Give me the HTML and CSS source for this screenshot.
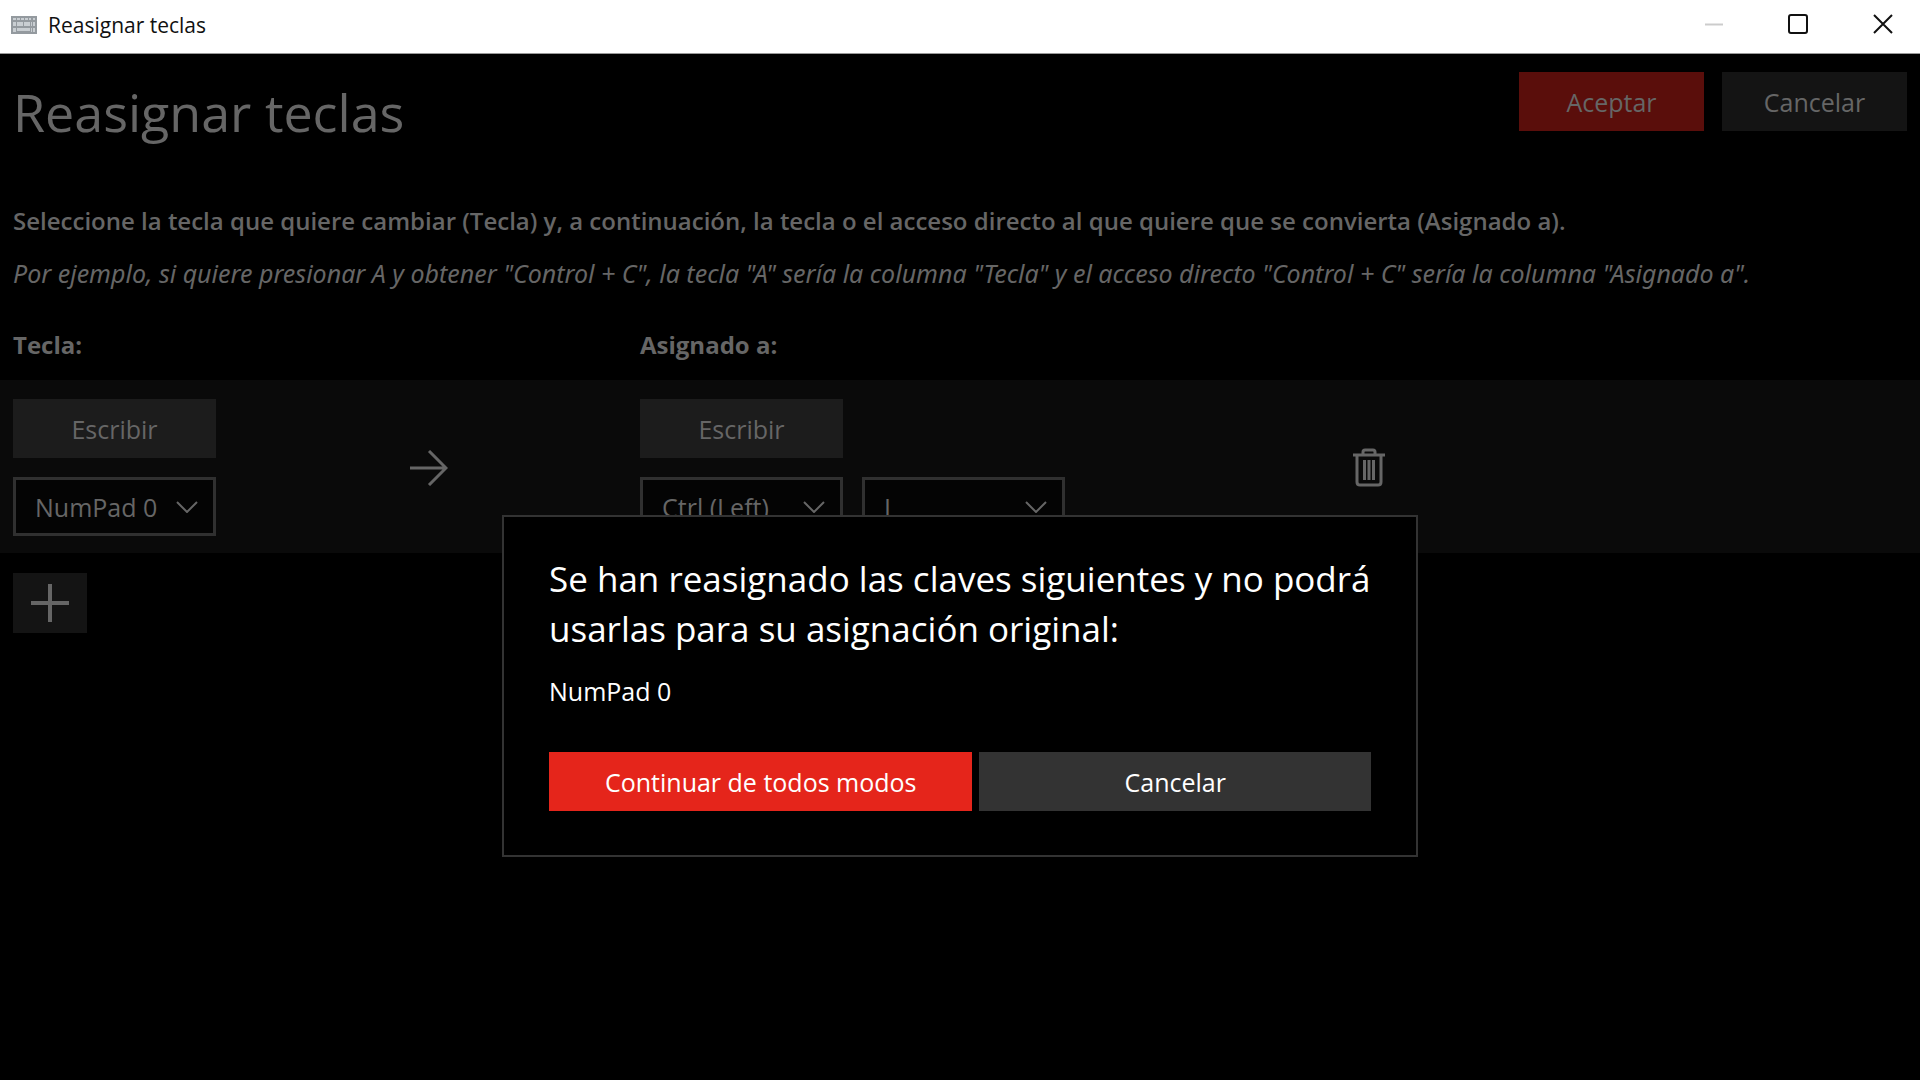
FILE: index.html
```html
<!DOCTYPE html>
<html lang="es">
<head>
<meta charset="utf-8">
<title>Reasignar teclas</title>
<link rel="stylesheet" href="styles.css">
</head>
<body>
<header class="titlebar">
  <svg class="app-icon" viewBox="0 0 26 18" aria-hidden="true">
    <rect width="26" height="18" fill="#949a9f"/>
    <path d="M2 2h3v2H2zM6 2h3v2H6zM10 2h3v2h-3zM14 2h3v2h-3zM18 2h2v2h-2zM22 2h2v2h-2zM2 6h3v4H2zM6 6h6v4H6zM13 6h6v4h-6zM20 6h1v4h-1zM22 6h2v4h-2zM2 12h3v4H2zM6 12h13v3H6zM20 12h1v4h-1zM22 12h2v4h-2z" fill="#c9ced2"/>
  </svg>
  <span class="titlebar-text">Reasignar teclas</span>
  <div class="window-controls">
    <button class="window-button window-button-off" aria-label="Minimizar" disabled>
      <svg viewBox="0 0 20 20"><path d="M1 10.500h18"/></svg>
    </button>
    <button class="window-button" aria-label="Maximizar">
      <svg viewBox="0 0 20 20"><rect x="1" y="1" width="18" height="18" rx="2"/></svg>
    </button>
    <button class="window-button window-button-close" aria-label="Cerrar">
      <svg viewBox="0 0 20 20"><path d="M1 1l18 18M19 1L1 19"/></svg>
    </button>
  </div>
</header>

<main class="content">
  <div class="page-head">
    <h1 class="page-title">Reasignar teclas</h1>
    <div class="page-actions">
      <button class="button button-accent">Aceptar</button>
      <button class="button">Cancelar</button>
    </div>
  </div>
  <p class="intro">Seleccione la tecla que quiere cambiar (Tecla) y, a continuación, la tecla o el acceso directo al que quiere que se convierta (Asignado a).</p>
  <p class="example">Por ejemplo, si quiere presionar A y obtener "Control + C", la tecla "A" sería la columna "Tecla" y el acceso directo "Control + C" sería la columna "Asignado a".</p>

  <div class="remap-grid column-heads">
    <h2 class="column-head" id="head-key">Tecla:</h2>
    <h2 class="column-head column-target" id="head-target">Asignado a:</h2>
  </div>

  <div class="remap-grid remap-row">
    <div class="key-group">
      <button class="button button-type">Escribir</button>
      <div class="select-box">
        <select aria-labelledby="head-key"><option>NumPad 0</option></select>
        <svg class="chevron" viewBox="0 0 22 12" aria-hidden="true"><path d="M1 1l10 10L21 1"/></svg>
      </div>
    </div>
    <svg class="arrow" viewBox="0 0 38 36" aria-hidden="true"><path d="M0 18h36M19 1l17 17-17 17"/></svg>
    <div class="key-group">
      <button class="button button-type">Escribir</button>
      <div class="select-row">
        <div class="select-box">
          <select aria-labelledby="head-target"><option>Ctrl (Left)</option></select>
          <svg class="chevron" viewBox="0 0 22 12" aria-hidden="true"><path d="M1 1l10 10L21 1"/></svg>
        </div>
        <div class="select-box">
          <select aria-labelledby="head-target"><option>I</option></select>
          <svg class="chevron" viewBox="0 0 22 12" aria-hidden="true"><path d="M1 1l10 10L21 1"/></svg>
        </div>
      </div>
    </div>
    <button class="delete-button" aria-label="Eliminar">
      <svg viewBox="0 0 32 40">
        <path d="M0 7h32" stroke-width="3"/>
        <path d="M10 6V4q0-2 2-2h8q2 0 2 2v2" stroke-width="3"/>
        <path d="M4 7v27q0 3 3 3h18q3 0 3-3V7" stroke-width="3"/>
        <path d="M11.500 12v20M16 12v20M20.500 12v20" stroke-width="3"/>
      </svg>
    </button>
  </div>

  <button class="add-button" aria-label="Agregar">
    <svg viewBox="0 0 38 38"><path d="M0 19h38M19 0v38"/></svg>
  </button>
</main>

<div class="overlay">
  <section class="dialog" role="dialog" aria-labelledby="dialog-title">
    <h2 class="dialog-title" id="dialog-title">Se han reasignado las claves siguientes y no podrá usarlas para su asignación original:</h2>
    <p class="dialog-text">NumPad 0</p>
    <div class="dialog-actions">
      <button class="button dialog-button dialog-button-accent">Continuar de todos modos</button>
      <button class="button dialog-button">Cancelar</button>
    </div>
  </section>
</div>
</body>
</html>
```
FILE: styles.css
```css
* {
  box-sizing: border-box;
}

body {
  margin: 0;
  min-height: 100vh;
  background: #000;
  color: #666;
  font-family: "Open Sans", "Noto Sans", sans-serif;
  font-size: 25px;
  line-height: 34px;
}

h1, h2, p {
  margin: 0;
}

button, select {
  font: inherit;
  color: inherit;
  border: 0;
  border-radius: 0;
  padding: 0;
}

svg {
  display: block;
  fill: none;
  stroke: currentColor;
}

/* Title bar */
.titlebar {
  display: flex;
  align-items: center;
  height: 54px;
  padding: 0 0 3px 11px;
  background: #fff;
  border-bottom: 1px solid #999;
  color: #111;
}

.app-icon {
  width: 26px;
  height: 18px;
  stroke: none;
}

.titlebar-text {
  margin-left: 11px;
  font-size: 21px;
}

.window-controls {
  display: flex;
  margin-left: auto;
  align-self: stretch;
}

.window-button {
  display: grid;
  place-items: center;
  width: 84px;
  padding-bottom: 2px;
  background: none;
}

.window-button svg {
  width: 20px;
  height: 20px;
  stroke-width: 2;
}

.window-button-off {
  color: #ccc;
}

.window-button-close {
  width: 80px;
  padding-left: 6px;
}

/* Page */
.page-head {
  display: flex;
  justify-content: space-between;
  align-items: flex-start;
  padding: 18px 13px 0;
  height: 148px;
}

.page-title {
  padding-top: 2px;
  font-size: 52px;
  line-height: 76px;
  font-weight: 400;
}

.page-actions {
  display: flex;
  gap: 18px;
}

.button {
  width: 185px;
  height: 59px;
  background: #141414;
}

.button-accent {
  background: #5a0e0b;
}

.intro,
.example {
  padding: 0 13px;
}

.intro {
  padding-top: 2px;
  font-size: 24px;
  font-weight: 600;
}

.example {
  margin-top: 18px;
  font-family: "Noto Sans", "Open Sans", sans-serif;
  font-style: italic;
}

.remap-grid {
  display: grid;
  grid-template-columns: 397fr 230fr 713fr 554fr;
  padding: 0 13px;
}

.column-heads {
  margin-top: 38px;
}

.column-head {
  font-size: 24px;
  line-height: 34px;
  font-weight: 700;
}

.column-target {
  grid-column: 3;
}

.remap-row {
  align-items: center;
  margin-top: 18px;
  padding-top: 19px;
  padding-bottom: 17px;
  background: #0a0a0a;
}

.key-group {
  display: grid;
  justify-items: start;
  gap: 19px;
}

.button-type {
  width: 203px;
  background: #1c1c1c;
}

.select-row {
  display: flex;
  gap: 19px;
}

.select-box {
  display: grid;
  align-items: center;
  width: 203px;
  height: 59px;
}

.select-box select,
.chevron {
  grid-area: 1 / 1;
}

.select-box select {
  appearance: none;
  width: 100%;
  height: 100%;
  padding: 0 48px 0 19px;
  background: #040404;
  border: 3px solid #303030;
}

.chevron {
  justify-self: end;
  width: 22px;
  height: 12px;
  margin-right: 18px;
  stroke-width: 2;
  pointer-events: none;
}

.arrow {
  width: 38px;
  height: 36px;
  stroke-width: 3;
}

.delete-button {
  width: 32px;
  height: 40px;
  background: none;
}

.add-button {
  display: grid;
  place-items: center;
  width: 74px;
  height: 60px;
  margin: 20px 13px;
  background: #141414;
}

.add-button svg {
  width: 38px;
  height: 38px;
  stroke-width: 4;
}

/* Confirmation dialog */
.overlay {
  position: absolute;
  top: 515px;
  left: 0;
  right: 0;
  display: flex;
  justify-content: center;
}

.dialog {
  width: 916px;
  padding: 37px 45px 44px;
  background: #000;
  border: 2px solid #333;
  color: #fff;
}

.dialog-title {
  font-size: 35px;
  line-height: 50px;
  font-weight: 400;
}

.dialog-text {
  margin-top: 20px;
}

.dialog-actions {
  display: grid;
  grid-template-columns: 424fr 392fr;
  gap: 7px;
  margin-top: 44px;
}

.dialog-button {
  width: auto;
  background: #333;
}

.dialog-button-accent {
  background: #e5251b;
}
```
